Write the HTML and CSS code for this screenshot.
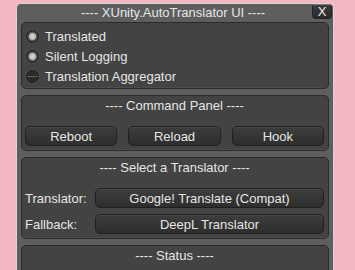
FILE: index.html
```html
<!DOCTYPE html>
<html lang="en">
<head>
    <meta charset="UTF-8">
    <title>XUnity.AutoTranslator UI</title>
    <link rel="stylesheet" href="styles.css">
</head>
<body>
    <div class="window">
        <div class="title-bar">
            <span class="title">---- XUnity.AutoTranslator UI ----</span>
            <button class="close-btn">X</button>
        </div>

        <!-- Toggles -->
        <div class="panel toggles">
            <div class="toggle"><span class="radio on"></span>Translated</div>
            <div class="toggle"><span class="radio on"></span>Silent Logging</div>
            <div class="toggle"><span class="radio"></span>Translation Aggregator</div>
        </div>

        <!-- Command Panel -->
        <div class="panel">
            <div class="panel-head">---- Command Panel ----</div>
            <div class="commands">
                <button class="btn">Reboot</button>
                <button class="btn">Reload</button>
                <button class="btn">Hook</button>
            </div>
        </div>

        <!-- Translator selection -->
        <div class="panel">
            <div class="panel-head">---- Select a Translator ----</div>
            <div class="select-grid">
                <span class="label">Translator:</span>
                <button class="btn">Google! Translate (Compat)</button>
                <span class="label">Fallback:</span>
                <button class="btn">DeepL Translator</button>
            </div>
        </div>

        <!-- Status -->
        <div class="panel status">
            <div class="panel-head">---- Status ----</div>
        </div>
    </div>
</body>
</html>
```

FILE: styles.css
```css
html, body {
    height: 270px;
    overflow: hidden;
}
body {
    margin: 0;
    padding: 3px 0 0 16px;
    box-sizing: border-box;
    background-color: #f5b8c2;
    font-family: "Liberation Sans", Arial, sans-serif;
    font-size: 13px;
    color: #e6e6e6;
}
.window {
    width: 318px;
    height: 300px;
    background-color: #5d5e5d;
    border: 1px solid #d6d6d6;
    border-radius: 5px 5px 0 0;
    padding: 0 4px 0 4px;
    box-sizing: border-box;
    display: flex;
    flex-direction: column;
    gap: 6px;
}

/* Title bar */
.title-bar {
    position: relative;
    height: 18px;
    line-height: 17px;
    text-align: center;
    margin-bottom: -6px;
}
.title {
    display: inline-block;
    margin-left: -4px;
}
.close-btn {
    position: absolute;
    top: 0;
    right: -3px;
    width: 20px;
    height: 15px;
    padding: 0;
    border: 1px solid #232323;
    border-top-color: #7a7a7a;
    border-radius: 4px;
    background: linear-gradient(#3a3b3a, #2a2b2a);
    color: #ececec;
    font-family: "Liberation Sans", Arial, sans-serif;
    font-size: 13px;
    line-height: 13px;
}

/* Panels */
.panel {
    background-color: #424342;
    border: 1px solid #2a2b2a;
    border-radius: 5px;
    padding: 1px 4px 4px 3px;
    box-shadow: inset 0 -1px 0 #4c4d4c;
}
.panel-head {
    line-height: 18px;
    text-align: center;
    margin-bottom: 11px;
}
.toggles {
    padding: 3px 4px 2px 4px;
}
.toggle {
    display: flex;
    align-items: center;
    height: 20px;
}
.radio {
    width: 11px;
    height: 11px;
    border: 1px solid #1b1b1b;
    border-radius: 50%;
    margin: 0 6px 0 0;
    background: linear-gradient(#2a2b2a 0%, #2a2b2a 42%, #5a5b5a 50%, #2a2b2a 58%, #252625 100%);
    box-shadow: 0 0 0 1px #4e4f4e;
}
.radio.on {
    background: radial-gradient(circle at 50% 50%, #dadada 0, #bababa 3px, #5a5b5a 4px, #303130 6px);
}

/* Buttons */
.btn {
    height: 20px;
    padding: 0;
    border: 1px solid #1e1f1e;
    border-radius: 5px;
    background: linear-gradient(#3c3d3c, #2d2e2d);
    box-shadow: inset 0 1px 0 #4a4b4a;
    color: #e6e6e6;
    font-family: "Liberation Sans", Arial, sans-serif;
    font-size: 13px;
}
.commands {
    display: grid;
    grid-template-columns: 1fr 1fr 1fr;
    gap: 11px;
}
.select-grid {
    display: grid;
    grid-template-columns: 70px 1fr;
    row-gap: 6px;
    align-items: center;
}
.status {
    flex-grow: 1;
}
```
